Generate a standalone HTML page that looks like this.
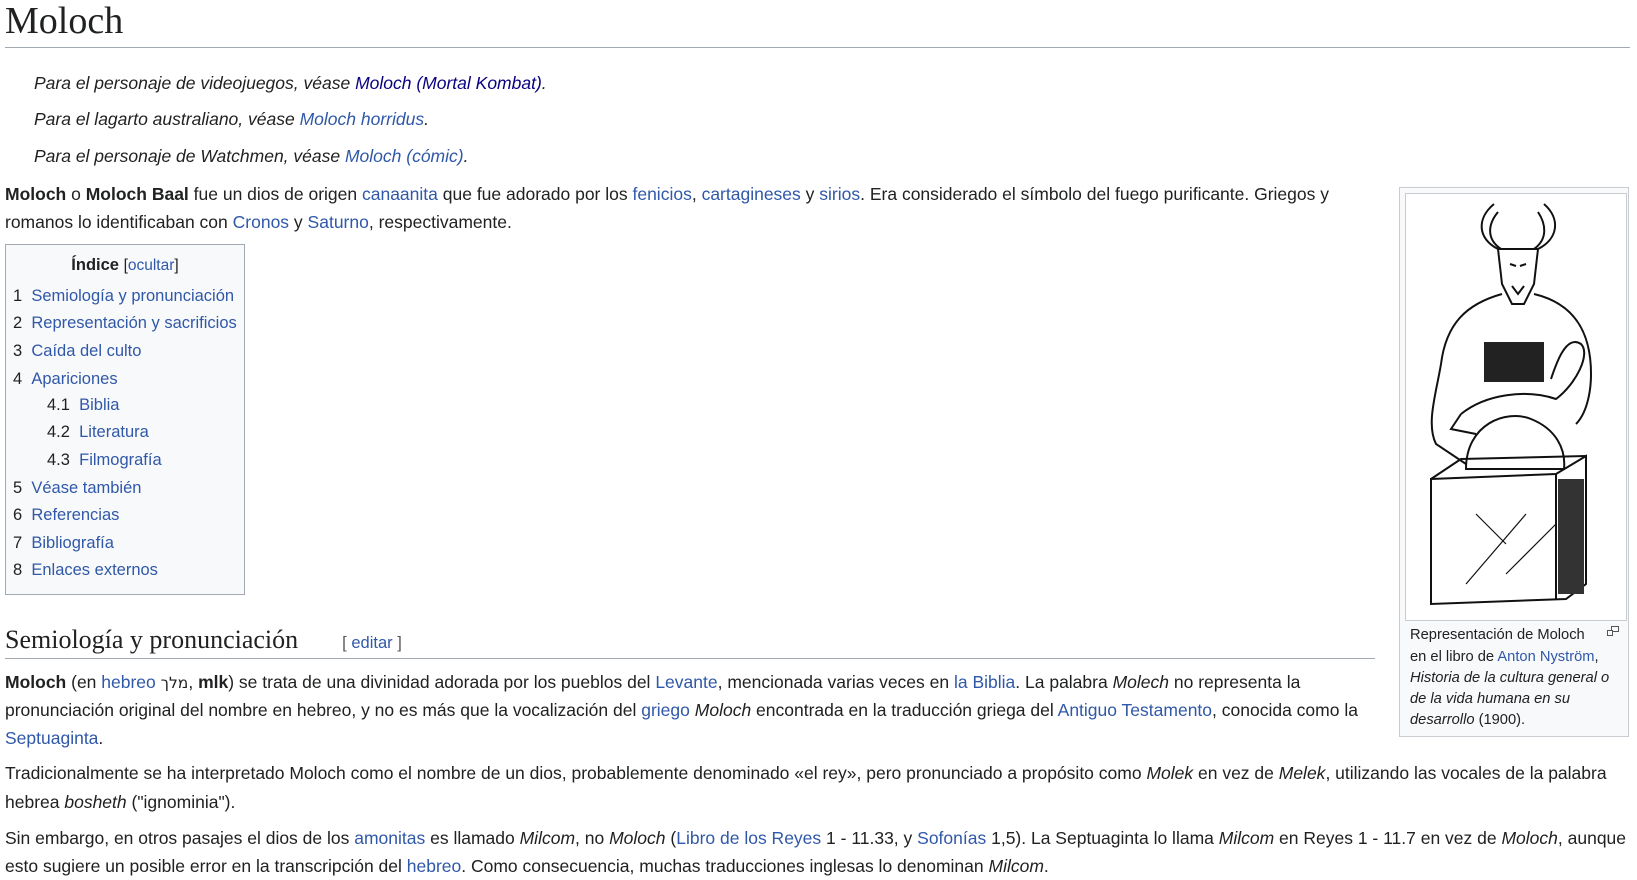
<!DOCTYPE html>
<html><head><meta charset="utf-8"><style>
body{margin:0;width:1637px;height:875px;overflow:hidden;background:#fff;color:#202122;font-family:"Liberation Sans",Arial,sans-serif;font-size:17.5px;position:relative}
a{color:#3058a8;text-decoration:none}
.l{position:absolute;white-space:nowrap;line-height:28px;height:28px}
.h1{position:absolute;left:5px;top:-4px;font-family:"Liberation Serif",serif;font-size:38px;line-height:50px}
.rule{position:absolute;height:1px;background:#a2a9b1}
.hat{font-style:italic;left:34px}
.toc{position:absolute;left:5px;top:244px;width:240px;height:351px;border:1px solid #a2a9b1;background:#f8f9fa;box-sizing:border-box;font-size:16.5px}
.toc .l{font-size:16.5px}
.n{color:#202122}
.infobox{position:absolute;left:1399px;top:187px;width:230px;height:550px;border:1px solid #c8ccd1;background:#f8f9fa;box-sizing:border-box}
.img{position:absolute;left:5px;top:5px;width:220px;height:426px;background:#fff;border:1px solid #c8ccd1}
.cap{position:absolute;left:1410px;font-size:14.7px;line-height:21px;white-space:nowrap}
</style></head><body>
<div class="h1">Moloch</div>
<div class="rule" style="left:5px;top:47px;width:1625px"></div>

<div class="l hat" style="top:69px">Para el personaje de videojuegos, véase <a style="color:#0b0080">Moloch (Mortal Kombat)</a>.</div>
<div class="l hat" style="top:105px">Para el lagarto australiano, véase <a>Moloch horridus</a>.</div>
<div class="l hat" style="top:142px">Para el personaje de Watchmen, véase <a>Moloch (cómic)</a>.</div>

<div class="l" style="left:5px;top:180px"><b>Moloch</b> o <b>Moloch Baal</b> fue un dios de origen <a>canaanita</a> que fue adorado por los <a>fenicios</a>, <a>cartagineses</a> y <a>sirios</a>. Era considerado el símbolo del fuego purificante. Griegos y</div>
<div class="l" style="left:5px;top:208px">romanos lo identificaban con <a>Cronos</a> y <a>Saturno</a>, respectivamente.</div>

<div class="toc">
<div class="l" style="left:0;width:238px;text-align:center;top:6px"><b>Índice</b> <span style="font-size:15.5px">[<a>ocultar</a>]</span></div>
<div class="l" style="left:7px;top:37px"><span class="n">1</span>&nbsp;&nbsp;<a>Semiología y pronunciación</a></div>
<div class="l" style="left:7px;top:64px"><span class="n">2</span>&nbsp;&nbsp;<a>Representación y sacrificios</a></div>
<div class="l" style="left:7px;top:92px"><span class="n">3</span>&nbsp;&nbsp;<a>Caída del culto</a></div>
<div class="l" style="left:7px;top:120px"><span class="n">4</span>&nbsp;&nbsp;<a>Apariciones</a></div>
<div class="l" style="left:41px;top:146px"><span class="n">4.1</span>&nbsp;&nbsp;<a>Biblia</a></div>
<div class="l" style="left:41px;top:173px"><span class="n">4.2</span>&nbsp;&nbsp;<a>Literatura</a></div>
<div class="l" style="left:41px;top:201px"><span class="n">4.3</span>&nbsp;&nbsp;<a>Filmografía</a></div>
<div class="l" style="left:7px;top:229px"><span class="n">5</span>&nbsp;&nbsp;<a>Véase también</a></div>
<div class="l" style="left:7px;top:256px"><span class="n">6</span>&nbsp;&nbsp;<a>Referencias</a></div>
<div class="l" style="left:7px;top:284px"><span class="n">7</span>&nbsp;&nbsp;<a>Bibliografía</a></div>
<div class="l" style="left:7px;top:311px"><span class="n">8</span>&nbsp;&nbsp;<a>Enlaces externos</a></div>
</div>

<div class="infobox"><div class="img">
<svg width="220" height="426" viewBox="0 0 220 426" fill="none" stroke="#111" stroke-width="2">
<path d="M88 10 C70 25 72 45 92 55 M95 55 C80 45 82 30 92 18"/>
<path d="M138 10 C155 25 152 45 132 55 M128 55 C142 45 140 30 132 18"/>
<path d="M92 55 L132 55 L128 90 L118 110 L106 110 L96 90 Z"/>
<path d="M106 92 L112 100 L118 92 M104 70 L110 72 M114 72 L120 70"/>
<path d="M96 100 C60 110 40 130 35 170 C30 200 20 230 30 250 L60 270 M128 100 C170 110 185 140 185 180 C185 200 180 220 170 230"/>
<rect x="78" y="148" width="60" height="40" fill="#222" stroke="none"/>
<path d="M55 220 C80 200 120 195 150 205 C170 190 185 160 175 150 C160 140 150 170 145 185 M55 220 L45 235 L70 240"/>
<path d="M60 275 C60 230 100 215 125 225 C150 235 160 255 158 275 Z"/>
<path d="M25 285 L150 280 L180 262 L180 390 L160 405 L25 410 Z"/>
<path d="M150 280 L150 405 M25 285 L55 265 L180 262"/>
<rect x="152" y="285" width="26" height="115" fill="#333" stroke="none"/>
<path d="M60 390 L120 320 M100 380 L150 330 M70 320 L100 350" stroke-width="1.2"/>
</svg></div>
<svg style="position:absolute;left:207px;top:438px" width="12" height="10" viewBox="0 0 12 10" fill="none" stroke="#555" stroke-width="1"><rect x="4.5" y="0.5" width="7" height="5"/><rect x="0.5" y="4.5" width="5" height="5" fill="#f8f9fa"/></svg>
</div>
<div class="cap" style="top:625px">Representación de Moloch</div>
<div class="cap" style="top:647px">en el libro de <a>Anton Nyström</a>,</div>
<div class="cap" style="top:668px"><i>Historia de la cultura general o</i></div>
<div class="cap" style="top:689px"><i>de la vida humana en su</i></div>
<div class="cap" style="top:710px"><i>desarrollo</i> (1900).</div>

<div class="l" style="left:5px;top:622px;height:36px;line-height:36px;font-family:'Liberation Serif',serif;font-size:26px">Semiología y pronunciación<span style="font-family:'Liberation Sans',sans-serif;font-size:16.5px;color:#54595d;margin-left:44px">[ <a>editar</a> ]</span></div>
<div class="rule" style="left:5px;top:658px;width:1370px"></div>

<div class="l" style="left:5px;top:668px"><b>Moloch</b> (en <a>hebreo</a> <span style="font-family:'DejaVu Sans',sans-serif;font-size:15.5px">מלך</span>, <b>mlk</b>) se trata de una divinidad adorada por los pueblos del <a>Levante</a>, mencionada varias veces en <a>la Biblia</a>. La palabra <i>Molech</i> no representa la</div>
<div class="l" style="left:5px;top:696px">pronunciación original del nombre en hebreo, y no es más que la vocalización del <a>griego</a> <i>Moloch</i> encontrada en la traducción griega del <a>Antiguo Testamento</a>, conocida como la</div>
<div class="l" style="left:5px;top:724px"><a>Septuaginta</a>.</div>
<div class="l" style="left:5px;top:759px">Tradicionalmente se ha interpretado Moloch como el nombre de un dios, probablemente denominado «el rey», pero pronunciado a propósito como <i>Molek</i> en vez de <i>Melek</i>, utilizando las vocales de la palabra</div>
<div class="l" style="left:5px;top:788px">hebrea <i>bosheth</i> ("ignominia").</div>
<div class="l" style="left:5px;top:824px">Sin embargo, en otros pasajes el dios de los <a>amonitas</a> es llamado <i>Milcom</i>, no <i>Moloch</i> (<a>Libro de los Reyes</a> 1 - 11.33, y <a>Sofonías</a> 1,5). La Septuaginta lo llama <i>Milcom</i> en Reyes 1 - 11.7 en vez de <i>Moloch</i>, aunque</div>
<div class="l" style="left:5px;top:852px">esto sugiere un posible error en la transcripción del <a>hebreo</a>. Como consecuencia, muchas traducciones inglesas lo denominan <i>Milcom</i>.</div>
</body></html>
